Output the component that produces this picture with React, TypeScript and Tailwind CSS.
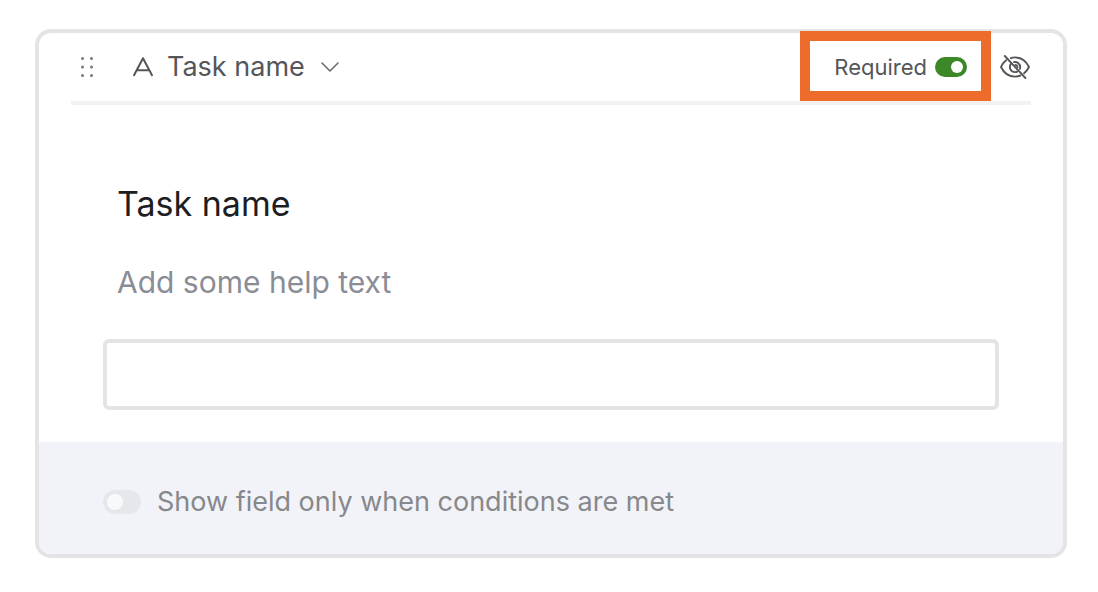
import { useId, useState } from "react";

function DragHandle() {
  return (
    <button type="button" aria-label="Reorder field" className="cursor-grab text-[#77787c]">
      <svg width="14" height="22" viewBox="0 0 14 22" fill="currentColor" aria-hidden="true">
        <circle cx="2.5" cy="2.5" r="1.5" />
        <circle cx="11.5" cy="2.5" r="1.5" />
        <circle cx="2.5" cy="11" r="1.5" />
        <circle cx="11.5" cy="11" r="1.5" />
        <circle cx="2.5" cy="19.5" r="1.5" />
        <circle cx="11.5" cy="19.5" r="1.5" />
      </svg>
    </button>
  );
}

function TextTypeIcon() {
  return (
    <svg
      width="22"
      height="22"
      viewBox="0 0 22 22"
      fill="none"
      stroke="#55565a"
      strokeWidth="2"
      strokeLinecap="round"
      strokeLinejoin="round"
      aria-hidden="true"
    >
      <path d="M2 19.2 11 2.200l9 17M5.200 14.200h11.600" />
    </svg>
  );
}

function ChevronIcon() {
  return (
    <svg
      className="pointer-events-none absolute right-0 top-1/2 -translate-y-1/2"
      width="20"
      height="12"
      viewBox="0 0 20 12"
      fill="none"
      stroke="#6b6c70"
      strokeWidth="1.6"
      strokeLinecap="round"
      strokeLinejoin="round"
      aria-hidden="true"
    >
      <path d="m2 2 8 8 8-8" />
    </svg>
  );
}

function HiddenEyeIcon() {
  return (
    <svg
      width="32"
      height="26"
      viewBox="0 0 32 26"
      fill="none"
      stroke="#55565a"
      strokeWidth="1.9"
      strokeLinecap="round"
      strokeLinejoin="round"
      aria-hidden="true"
    >
      <path d="M5.800 2 26.400 24" />
      <path d="M11.800 4.100C13.100 3.600 14.500 3.400 16 3.400c5.800 0 11.200 3.700 14 9.600-1.200 2.500-2.900 4.600-4.900 6.200" />
      <path d="M7.100 6.200C4.900 7.900 3.200 10.200 2 13c2.800 5.900 8.200 9.600 14 9.600 1.900 0 3.700-.4 5.400-1.100" />
      <path d="M15 8.100c3.400-.6 6.200 1.800 6.200 5 0 .6-.1 1.200-.3 1.700" />
      <path d="M11.900 9.900c-2.400 3.500-.1 8.200 4.200 8.200.8 0 1.500-.2 2.100-.5" />
      <path d="M16.400 10.900c1.300.2 2.100 1.100 2.100 2.300" />
    </svg>
  );
}

export default function App() {
  const [fieldType, setFieldType] = useState("Task name");
  const [required, setRequired] = useState(true);
  const [conditional, setConditional] = useState(false);
  const [hidden, setHidden] = useState(true);
  const titleId = useId();

  return (
    <main className="min-h-screen bg-white py-[29px] pl-[35px] pr-[31px] font-['Inter',sans-serif]">
      <section aria-labelledby={titleId} className="rounded-2xl border-4 border-[#e4e4e4]">
        <header className="mx-8 flex items-center justify-between border-b-4 border-[#f2f2f2] pl-[9px]">
          <div className="flex h-[68px] items-center">
            <DragHandle />
            <label className="relative ml-[38px] flex items-center gap-[13px]">
              <TextTypeIcon />
              <span className="relative flex items-center">
                <select
                  aria-label="Field type"
                  value={fieldType}
                  onChange={(e) => setFieldType(e.target.value)}
                  className="field-sizing-content h-11 appearance-none bg-transparent pr-[35px] text-[27px] leading-[44px] text-[#55565a]"
                >
                  <option>Task name</option>
                </select>
                <ChevronIcon />
              </span>
            </label>
          </div>

          <div className="flex items-center gap-8">
            <label className="relative flex items-center gap-2 text-[22px] leading-7 text-[#55565a]">
              Required
              <input
                type="checkbox"
                role="switch"
                checked={required}
                onChange={(e) => setRequired(e.target.checked)}
                className="flex h-5 w-8 appearance-none items-center rounded-full bg-[#e6e7ea] px-1 before:size-3 before:rounded-full before:bg-white checked:justify-end checked:bg-[#3c8727]"
              />
              <span className="pointer-events-none absolute -bottom-5 -left-[34px] -right-6 -top-[22px] border-[10px] border-[#ee6c2b]" />
            </label>
            <button
              type="button"
              aria-label="Hide field"
              aria-pressed={hidden}
              onClick={() => setHidden(!hidden)}
            >
              <HiddenEyeIcon />
            </button>
          </div>
        </header>

        <div className="px-16 pb-8 pt-[75px]">
          <h2 id={titleId} className="pl-[14px] text-[34px] leading-[48px] text-[#1c1e24]">
            Task name
          </h2>
          <input
            type="text"
            aria-label="Help text"
            placeholder="Add some help text"
            className="mt-[30px] block h-12 w-full pl-[14px] text-[30px] leading-[48px] text-[#1c1e24] outline-none placeholder:text-[#8a8d95]"
          />
          <input
            type="text"
            aria-labelledby={titleId}
            className="mt-[33px] block h-[71px] w-full rounded-md border-4 border-[#e4e4e4] px-4 text-[27px] outline-none"
          />
        </div>

        <footer className="rounded-b-xl bg-[#f2f3f8] px-16 pb-8 pt-10">
          <label className="flex items-center gap-4 text-[27px] leading-10 text-[#87888b]">
            <input
              type="checkbox"
              role="switch"
              checked={conditional}
              onChange={(e) => setConditional(e.target.checked)}
              className="flex h-6 w-[38px] shrink-0 appearance-none items-center rounded-full bg-[#e6e7ea] px-1 before:size-4 before:rounded-full before:bg-[#f8f9fb] checked:justify-end checked:bg-[#3c8727]"
            />
            Show field only when conditions are met
          </label>
        </footer>
      </section>
    </main>
  );
}
